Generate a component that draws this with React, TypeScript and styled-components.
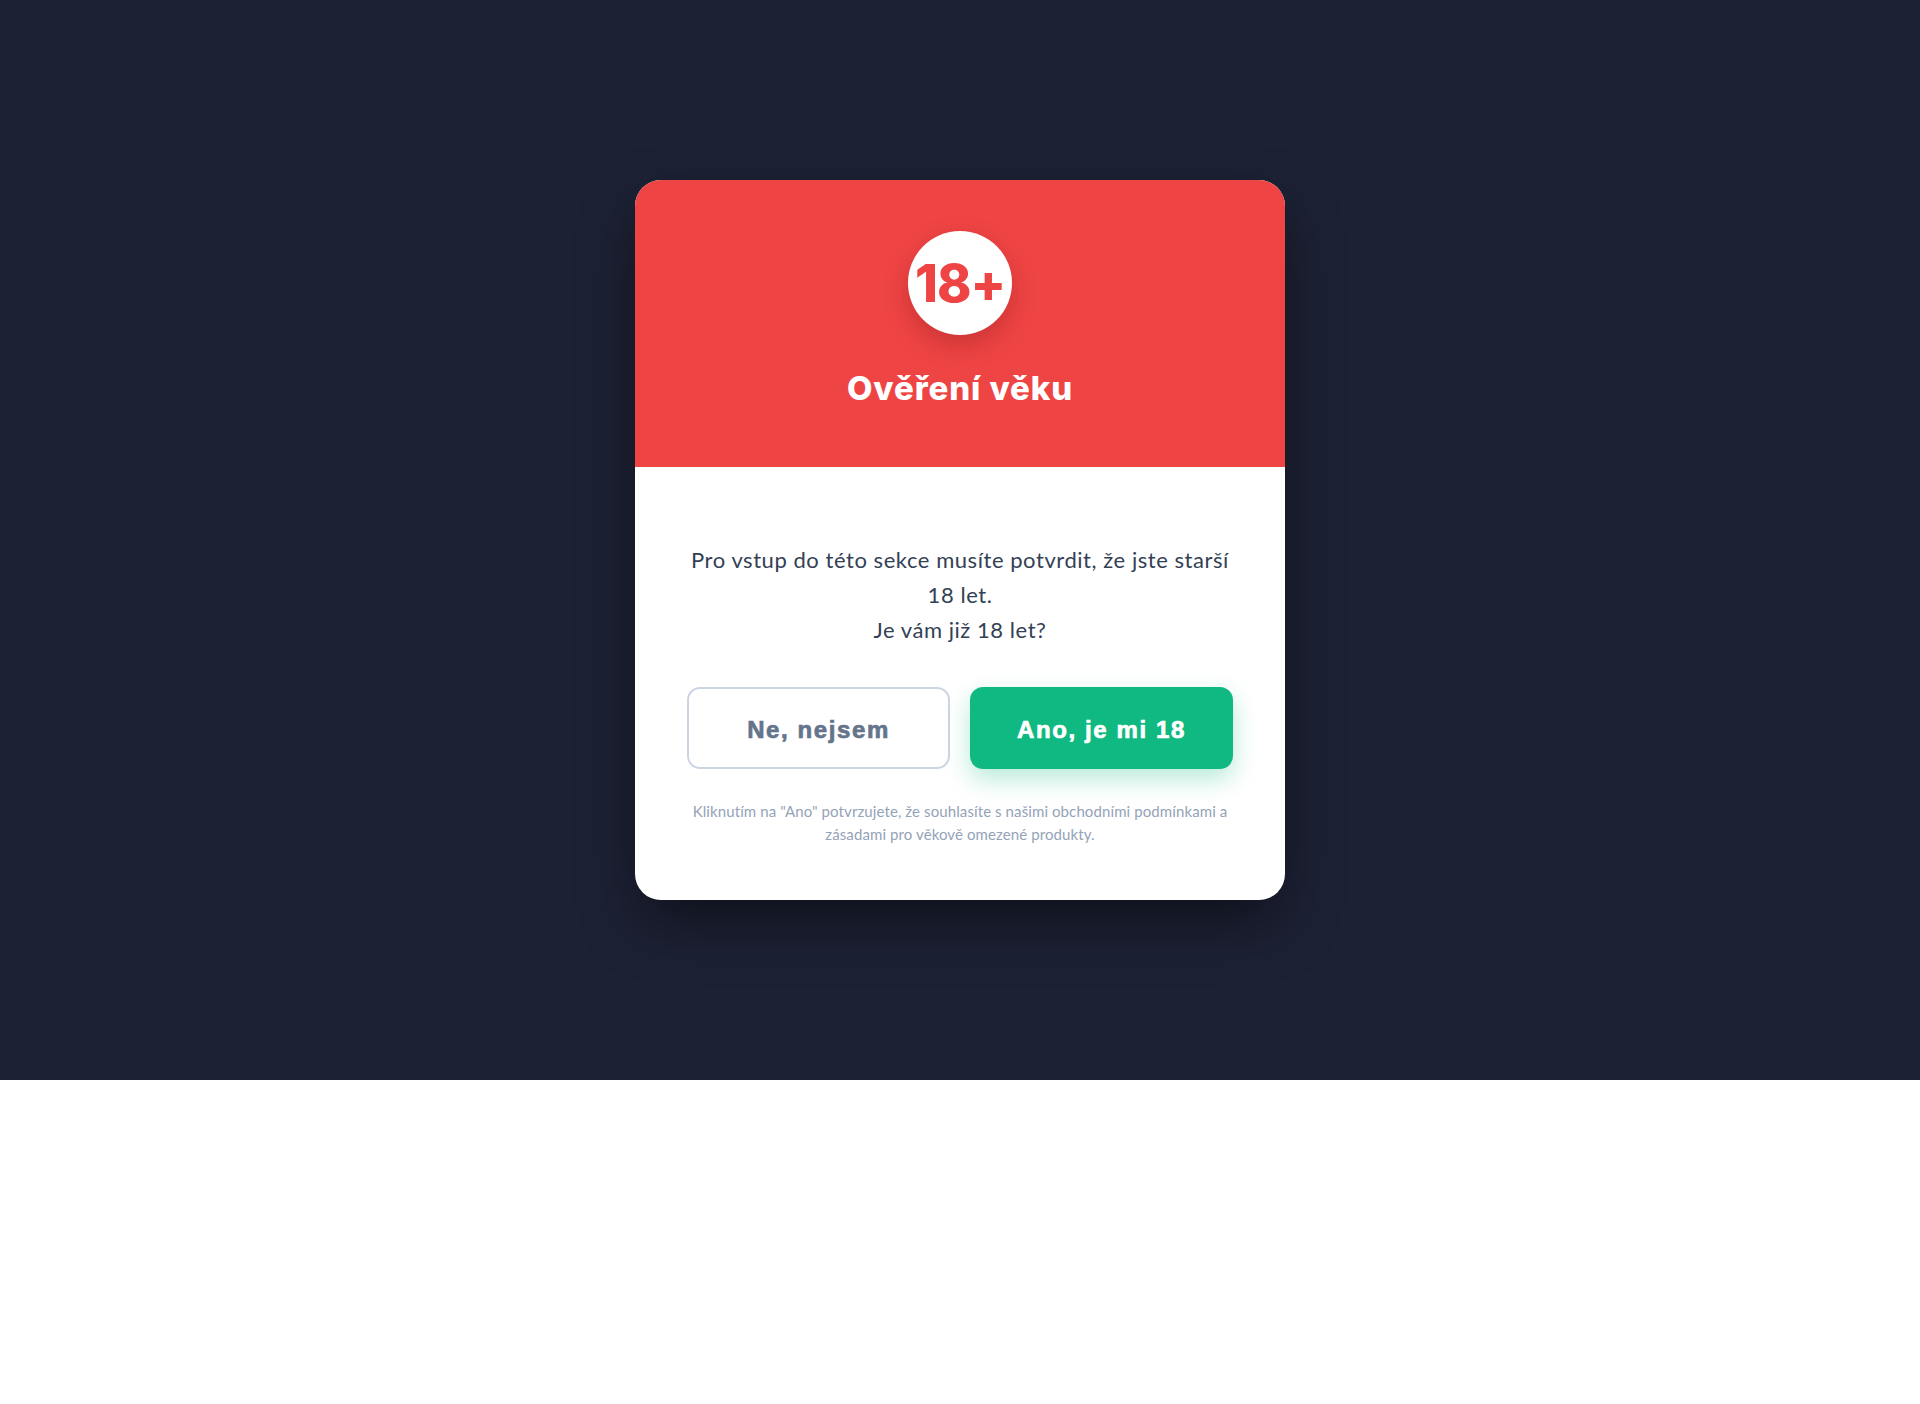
import React from 'react';
import styled, { createGlobalStyle } from 'styled-components';

const GlobalStyle = createGlobalStyle`
    html, body {
        margin: 0;
        padding: 0;
        background: #ffffff;
    }
    * {
        box-sizing: border-box;
    }
`

const Backdrop = styled.div`
    height: 1080px;
    background: #1c2134;
    display: flex;
    align-items: center;
    justify-content: center;
`

const Modal = styled.div`
    width: 650px;
    background: #ffffff;
    border-radius: 26px;
    overflow: hidden;
    box-shadow: 0 25px 60px -10px rgba(0, 0, 0, 0.55);
`

const Header = styled.div`
    background: #ef4444;
    padding: 51px 40px 59px;
    display: flex;
    flex-direction: column;
    align-items: center;
`

const Badge = styled.div`
    width: 104px;
    height: 104px;
    border-radius: 50%;
    background: #ffffff;
    display: flex;
    align-items: center;
    justify-content: center;
    box-shadow: 0 10px 25px rgba(120, 20, 20, 0.3);
    color: #ef4444;
    font-family: Inter, "Noto Sans", sans-serif;
    font-weight: 800;
    font-size: 52px;
    letter-spacing: -1px;
    margin-bottom: 33px;
`

const Title = styled.h2`
    margin: 0;
    color: #ffffff;
    font-family: Inter, "Noto Sans", sans-serif;
    font-weight: 800;
    font-size: 33px;
    line-height: 40px;
    letter-spacing: 0.9px;
`

const Body = styled.div`
    padding: 75px 52px 54px;
    text-align: center;
`

const Message = styled.p`
    margin: 0;
    color: #334155;
    font-family: Lato, "Noto Sans", sans-serif;
    font-size: 22px;
    line-height: 35px;
    letter-spacing: 0.55px;
`

const Actions = styled.div`
    display: grid;
    grid-template-columns: 1fr 1fr;
    gap: 20px;
    margin-top: 40px;
`

const ActionButton = styled.button<{ $primary?: boolean }>`
    height: 82px;
    padding: 4px 0 0;
    border-radius: 13px;
    border: 2px solid ${p => p.$primary ? '#10b981' : '#cbd5e1'};
    background: ${p => p.$primary ? '#10b981' : '#ffffff'};
    color: ${p => p.$primary ? '#ffffff' : '#64748b'};
    box-shadow: ${p => p.$primary ? '0 10px 25px rgba(16, 185, 129, 0.3)' : 'none'};
    font-family: "Liberation Sans", Arial, sans-serif;
    font-weight: 700;
    font-size: 24px;
    letter-spacing: 1.6px;
    -webkit-text-stroke: 0.7px currentColor;
    cursor: pointer;
`

const Note = styled.p`
    margin: 31px 0 0;
    color: #94a3b8;
    font-family: Lato, "Noto Sans", sans-serif;
    font-size: 15px;
    line-height: 23px;
    letter-spacing: 0.1px;
`

export default function App() {
    return <>
        <GlobalStyle />
        <Backdrop>
            <Modal>
                <Header>
                    <Badge>18+</Badge>
                    <Title>Ověření věku</Title>
                </Header>
                <Body>
                    <Message>
                        Pro vstup do této sekce musíte potvrdit, že jste starší 18 let.<br />
                        Je vám již 18 let?
                    </Message>
                    <Actions>
                        <ActionButton>Ne, nejsem</ActionButton>
                        <ActionButton $primary>Ano, je mi 18</ActionButton>
                    </Actions>
                    <Note>
                        Kliknutím na "Ano" potvrzujete, že souhlasíte s našimi obchodními podmínkami a zásadami pro věkově omezené produkty.
                    </Note>
                </Body>
            </Modal>
        </Backdrop>
    </>
}
